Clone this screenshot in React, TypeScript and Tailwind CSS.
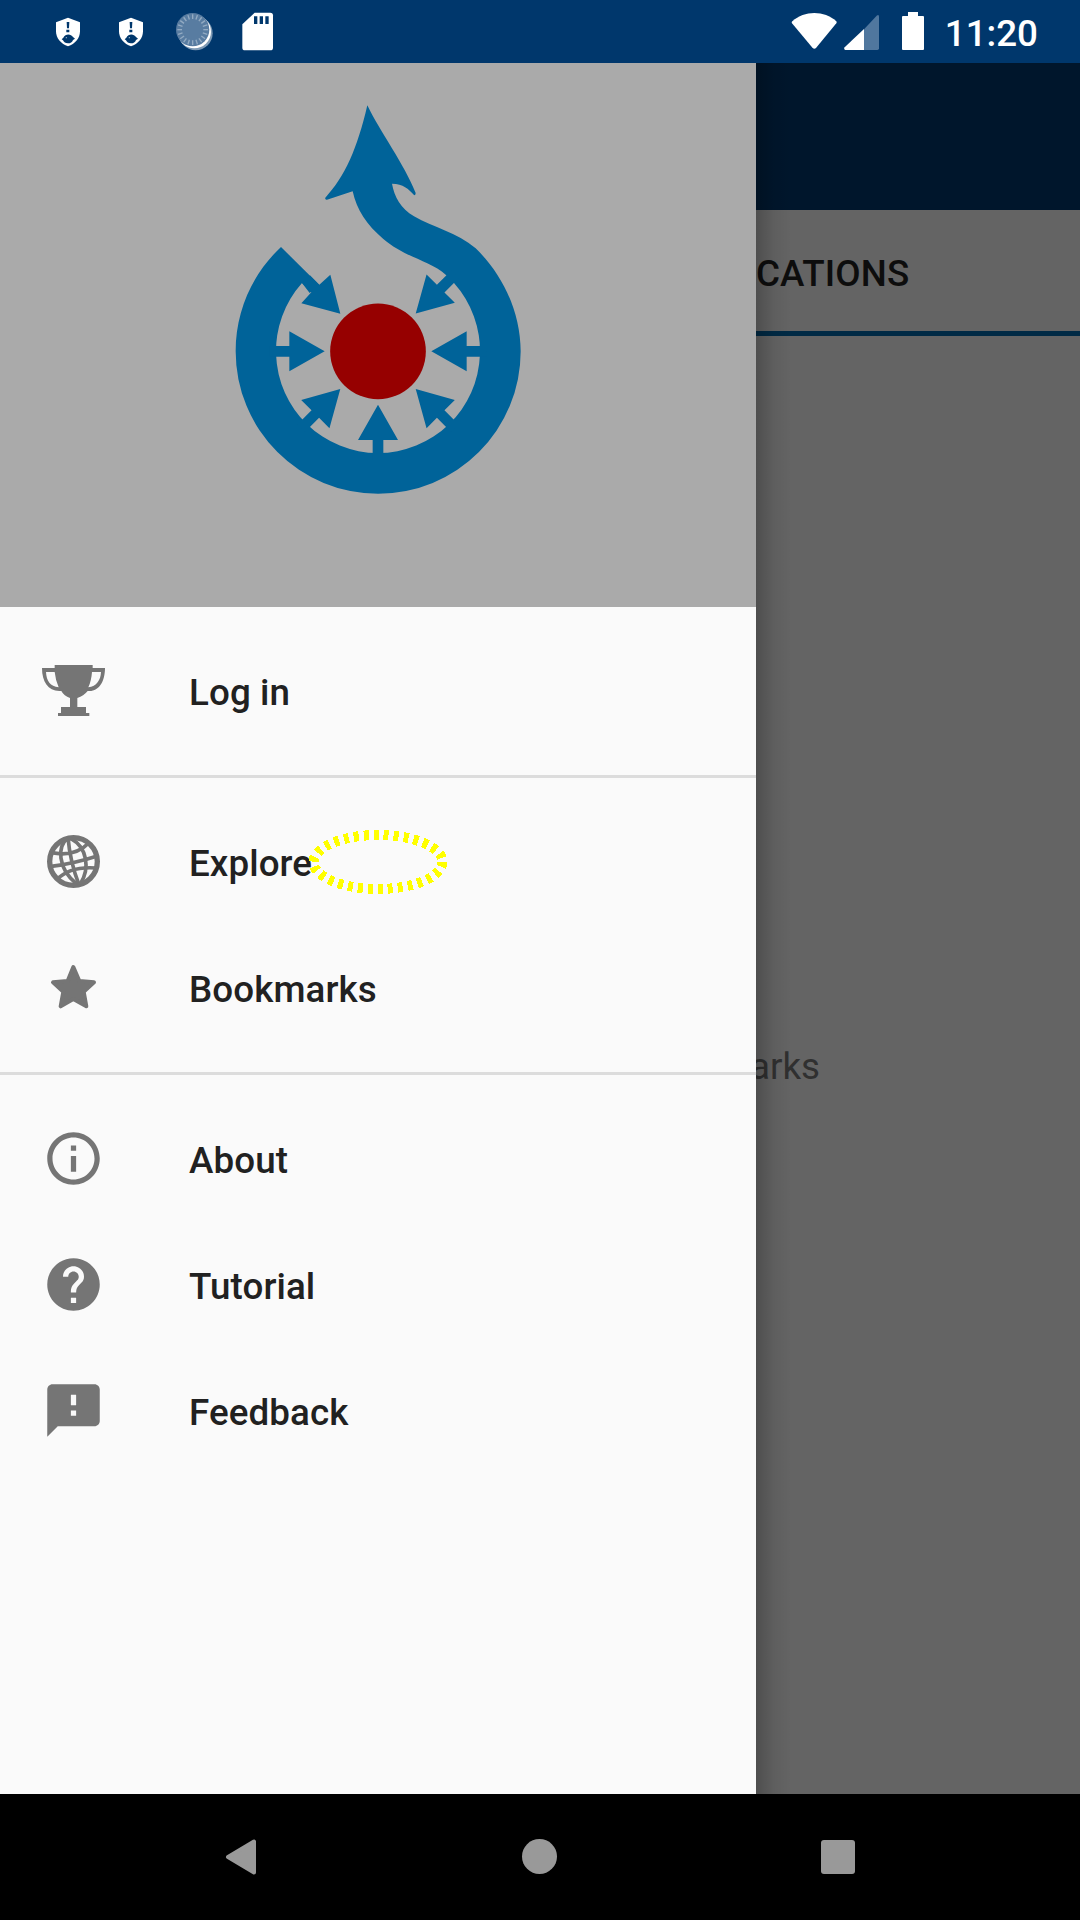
import React from "react";

function Shield() {
  return (
    <svg className="block h-[30px] w-[26px]" viewBox="0 0 78 90">
      <path d="M39 2 L75 16 V43 C75 64 60 81 39 88 C18 81 3 64 3 43 V16Z" fill="#fff" />
      <path d="M35 15 H43 L42 34 H36Z M34 38 H43 V46 H34Z" fill="#00376c" />
      <path d="M20 67 L25 62 C31 50 47 49 54 60 L60 65 L54 69 C52 76 46 79 39 79 C31 79 27 75 24 70Z" fill="#00376c" />
      <circle cx="34" cy="62" r="2" fill="#9db4ca" />
    </svg>
  );
}

function Spinner() {
  const spokes = Array.from({ length: 20 }, (_, i) => i * 18);
  return (
    <svg className="block h-[40px] w-[40px]" viewBox="0 0 120 120">
      <circle cx="59" cy="64" r="51" fill="#7e9ab5" />
      <circle cx="55" cy="59" r="50" fill="#fff" />
      <circle cx="50" cy="53" r="50" fill="#587ca1" />
      {spokes.map((a) => (
        <path key={a} d="M50 7 V21" stroke="#93abc3" strokeWidth="4" transform={`rotate(${a} 50 53)`} />
      ))}
    </svg>
  );
}

function SdCard() {
  return (
    <svg className="block h-[39px] w-[32px]" viewBox="0 0 96 117">
      <path d="M38 2 H85 Q93 2 93 10 V107 Q93 115 85 115 H9 Q1 115 1 107 V37Z" fill="#fff" />
      <path d="M36 13h10v23H36zM53 13h10v23H53zM70 13h10v23H70z" fill="#00376c" />
    </svg>
  );
}

function StatusBar() {
  return (
    <div className="relative z-20 flex h-[63px] shrink-0 items-center bg-[#00376c] pl-[55px] pr-[42px]">
      <Shield />
      <div className="ml-[37px]"><Shield /></div>
      <div className="ml-[32px]"><Spinner /></div>
      <div className="ml-[26px]"><SdCard /></div>
      <svg className="ml-auto block h-[39px] w-[134px]" viewBox="93 36 402 117">
        <path d="M97 64 C133 31 193 31 229 64 Q231 67 229 70 L168 144 Q163 149 158 144 L96 70 Q94 67 97 64Z" fill="#fff" />
        <path d="M312 88 L350 47 Q357 42 357 50 V145 Q357 150 352 150 H312Z" fill="#50779e" />
        <path d="M312 87 V150 H256 Q250 148 254 142Z" fill="#fff" />
        <path d="M444 36h30v12h15q3 0 3 3v96q0 3-3 3h-60q-3 0-3-3V51q0-3 3-3h15z" fill="#fff" />
      </svg>
      <span className="ml-[20px] mt-[5px] text-[36.75px] font-medium leading-none text-white">11:20</span>
    </div>
  );
}

function CommonsLogo() {
  const arrow = "M458 1110 V1050 H414 L474 944 L534 1050 H490 V1110Z";
  return (
    <svg className="ml-[220px] mt-[27px] block h-[420px] w-[320px]" viewBox="0 0 960 1260">
      <g fill="#006399">
        <path d="M183 471 L298 585 L269 609 L246 579 A306 306 0 1 0 702 579 L678 555 C628 510 555 503 490 447 C440 405 410 360 398 304 L321 329 Q314 330 316 323 C375 260 412 175 442 46 C480 125 553 223 587 309 Q587 317 582 315 C565 296 550 282 516 281 C523 320 542 355 582 379 C640 412 710 427 767 475 C850 555 902 670 902 784 A427.500 427.500 0 0 1 47 784 C47 665 96 552 183 471Z" />
        {[0, 45, 90, 270, 315].map((a) => (
          <path key={a} d={arrow} transform={`rotate(${a} 474 784)`} />
        ))}
        <path d={arrow} transform="rotate(225 474 784)" />
        <path d="M244 640 L274 607 L246 579 L270 556 L298 584 L331 554 L361 671Z" />
      </g>
      <circle cx="474" cy="784" r="143.500" fill="#960000" />
    </svg>
  );
}

function Trophy() {
  return (
    <svg className="block size-[63px]" viewBox="0 0 189 189">
      <path d="M38 18H152V27H189C189 67 171 96 143 96H137Q125 111 106 117V144H132V162H142V171H48V162H57V144H84V117Q66 111 58 96H52C18 96 0 68 0 27H38ZM12 39C13 65 25 83 50 85Q41 66 38 39ZM150 39Q148 66 139 85C164 82 176 63 177 39Z" fill="#757575" fillRule="evenodd" />
    </svg>
  );
}

function Globe() {
  return (
    <svg className="block size-[63px]" viewBox="66 60 189 189" fill="none" stroke="#757575">
      <circle cx="160.500" cy="154.500" r="71.500" strokeWidth="16" />
      <g strokeWidth="11">
        <path d="M144 82Q150 155 177 224M88 170Q158 162 232 138M94 128Q165 142 207 98M110 209Q151 168 228 174" />
        <path d="M144 84C112 108 111 174 170 222M153 86C201 112 211 175 181 222" />
      </g>
    </svg>
  );
}

function Star() {
  return (
    <svg className="block size-[63px]" viewBox="66 438 189 189">
      <path d="M160 471L178 513L222 517L191 545L199 589L160 567L122 589L130 545L99 517L143 513Z" fill="#757575" stroke="#757575" strokeWidth="12" strokeLinejoin="round" />
    </svg>
  );
}

function Glyph({ d }: { d: string }) {
  return (
    <svg className="block size-[63px]" viewBox="0 0 24 24" fill="#757575">
      <path d={d} />
    </svg>
  );
}

const INFO =
  "M11 17h2v-6h-2v6zm1-15C6.480 2 2 6.480 2 12s4.480 10 10 10 10-4.480 10-10S17.520 2 12 2zm0 18c-4.410 0-8-3.590-8-8s3.590-8 8-8 8 3.590 8 8-3.590 8-8 8zM11 9h2V7h-2v2z";
const HELP =
  "M12 2C6.480 2 2 6.480 2 12s4.480 10 10 10 10-4.480 10-10S17.520 2 12 2zm1 17h-2v-2h2v2zm2.070-7.750l-.9.920C13.450 12.900 13 13.500 13 15h-2v-.5c0-1.100.450-2.100 1.170-2.830l1.240-1.260c.370-.360.590-.860.590-1.410 0-1.100-.9-2-2-2s-2 .9-2 2H8c0-2.210 1.790-4 4-4s4 1.790 4 4c0 .880-.360 1.680-.930 2.250z";
const FEEDBACK =
  "M20 2H4c-1.100 0-1.990.9-1.990 2L2 22l4-4h14c1.100 0 2-.9 2-2V4c0-1.100-.9-2-2-2zm-7 12h-2v-2h2v2zm0-4h-2V6h2v4z";

function Item({ icon, label }: { icon: React.ReactNode; label: string }) {
  return (
    <div className="flex h-[126px] items-center pl-[42px]">
      <div className="mb-px">{icon}</div>
      <span className="ml-[84px] mt-[5px] text-[36.75px] font-medium leading-none tracking-[0.1px] text-[#212121]">{label}</span>
    </div>
  );
}

function Drawer() {
  return (
    <div className="relative flex w-[756px] shrink-0 flex-col bg-[#fafafa]">
      <div className="h-[544px] shrink-0 bg-[#aaaaaa]">
        <CommonsLogo />
      </div>
      <div className="border-b-[3px] border-[#dcdcdc] py-[21px]">
        <Item icon={<Trophy />} label="Log in" />
      </div>
      <div className="border-b-[3px] border-[#dcdcdc] py-[21px]">
        <Item icon={<Globe />} label="Explore" />
        <Item icon={<Star />} label="Bookmarks" />
      </div>
      <div className="py-[21px]">
        <Item icon={<Glyph d={INFO} />} label="About" />
        <Item icon={<Glyph d={HELP} />} label="Tutorial" />
        <Item icon={<Glyph d={FEEDBACK} />} label="Feedback" />
      </div>
      <svg className="absolute left-[300px] top-[759px] h-[80px] w-[156px]" viewBox="300 822 156 80" shapeRendering="crispEdges">
        <ellipse cx="378" cy="862" rx="64.500" ry="27" fill="none" stroke="#ffff00" strokeWidth="10" strokeDasharray="5 5" />
      </svg>
    </div>
  );
}

function DimmedContent() {
  return (
    <div className="relative flex flex-1 flex-col overflow-hidden bg-[#646464]">
      <div className="h-[147px] shrink-0 bg-[#00162c]" />
      <div className="flex h-[126px] shrink-0 items-center border-b-[5px] border-[#002a45]">
        <span className="mt-[8px] text-[36.75px] font-medium leading-none tracking-[0.1px] text-[#0d0d0d]">CATIONS</span>
      </div>
      <div className="mt-[713px] text-[36.75px] leading-none text-[#303030]">
        <span className="-ml-[6px]">arks</span>
      </div>
      <div className="absolute inset-y-0 left-0 w-[36px] bg-gradient-to-r from-black/22 via-black/6 to-transparent" />
    </div>
  );
}

function NavBar() {
  return (
    <div className="flex h-[126px] shrink-0 items-center bg-black pl-[225px] pr-[225px]">
      <svg className="block h-[36px] w-[32px]" viewBox="0 0 32 36">
        <path d="M3 18L29 2.500V33.500Z" fill="#999" stroke="#999" strokeWidth="4" strokeLinejoin="round" />
      </svg>
      <div className="mb-px ml-[265px] size-[35px] rounded-full bg-[#999]" />
      <div className="ml-[264px] size-[34px] rounded-[3px] bg-[#999]" />
    </div>
  );
}

export default function App() {
  return (
    <div className="flex h-[1920px] w-[1080px] flex-col overflow-hidden font-['Roboto',sans-serif]">
      <StatusBar />
      <div className="flex min-h-0 flex-1">
        <Drawer />
        <DimmedContent />
      </div>
      <NavBar />
    </div>
  );
}
